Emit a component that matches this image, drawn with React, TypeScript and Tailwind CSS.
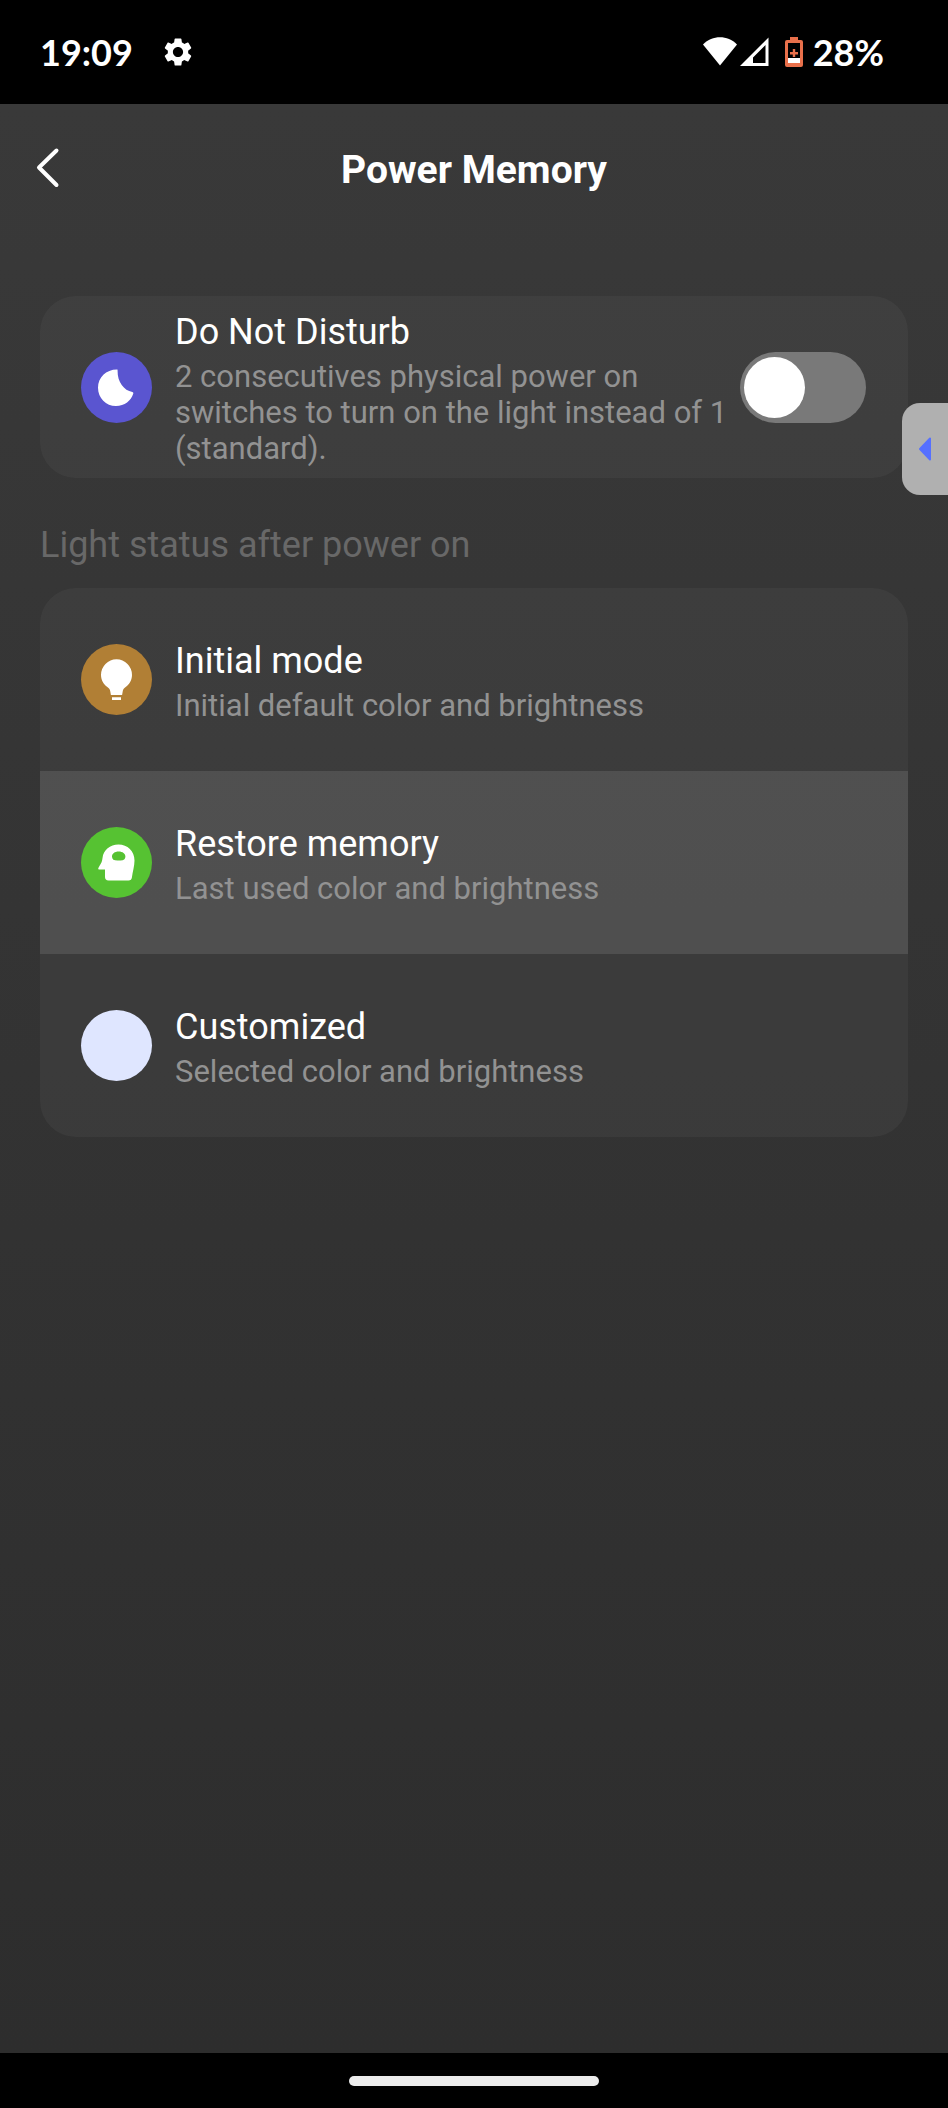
import { useState, type ReactNode } from "react";
import { MdSettings } from "react-icons/md";

type Mode = "initial" | "restore" | "custom";

function MoonIcon() {
  return (
    <svg viewBox="0 0 71 71" className="h-full w-full fill-white" aria-hidden="true">
      <path d="M36 17.6C25 17.6 17 25.6 17 35.7C17 46 25 54 35 54C43.5 54 50.3 48.6 52.3 41.5C52.5 40.6 52 40.2 51.3 40C43 38.5 36.4 30 36.6 19C36.6 18 36.6 17.6 36 17.6Z" />
    </svg>
  );
}

function BulbIcon() {
  return (
    <svg viewBox="0 0 71 71" className="h-full w-full fill-white" aria-hidden="true">
      <path d="M35.5 15.3A15.6 15.6 0 0 0 20 31C20 36 22.5 40 26 42.7C28.5 44.6 29 45.5 29.3 47.5L29.9 51H41.1L41.7 47.5C42 45.5 42.5 44.6 45 42.7C48.5 40 51 36 51 31A15.6 15.6 0 0 0 35.5 15.3Z" />
      <path d="M31 53.3H40V56H31Z" />
    </svg>
  );
}

function HeadIcon() {
  return (
    <svg viewBox="0 0 71 71" className="h-full w-full fill-white" aria-hidden="true">
      <path
        fillRule="evenodd"
        d="M37.5 17.5C46.5 17.5 53.5 24 53.5 33.5C53.5 39 51.6 45 50.9 50.5C50.6 52.6 49.6 53.5 47.5 53.5H27.5C25.2 53.5 24 52.3 24 50V42.6H18.5C17.3 42.6 16.9 41.7 17.5 40.7C19.5 37.2 21 35.6 21.5 31C22.4 23 29 17.5 37.5 17.5ZM37.6 24.4C33.7 24.4 31 26.6 31 29.4C31 32.3 32.8 33.5 36.5 33.5H39.5C42.8 33.5 44.4 32 44.4 29.4C44.4 26.6 41.7 24.4 37.6 24.4Z"
      />
    </svg>
  );
}

const MODES: { id: Mode; title: string; text: string; color: string; icon: ReactNode }[] = [
  {
    id: "initial",
    title: "Initial mode",
    text: "Initial default color and brightness",
    color: "bg-[#b17f35]",
    icon: <BulbIcon />,
  },
  {
    id: "restore",
    title: "Restore memory",
    text: "Last used color and brightness",
    color: "bg-[#56c232]",
    icon: <HeadIcon />,
  },
  {
    id: "custom",
    title: "Customized",
    text: "Selected color and brightness",
    color: "bg-[#dfe6ff]",
    icon: null,
  },
];

function RoundIcon({ color, children }: { color: string; children?: ReactNode }) {
  return <span className={`h-[71px] w-[71px] shrink-0 overflow-hidden rounded-full ${color}`}>{children}</span>;
}

function RowText({ title, text }: { title: string; text: string }) {
  return (
    <span className="flex min-w-0 flex-1 flex-col gap-1.5 pt-1">
      <span className="text-[36px] leading-[42px] text-white">{title}</span>
      <span className="text-[31px] leading-[36px] text-[#929292]">{text}</span>
    </span>
  );
}

function StatusBar() {
  return (
    <div className="flex h-[104px] items-center justify-between bg-black pr-16 pl-10 font-['Lato',sans-serif] text-[36px] leading-none font-bold text-white">
      <div className="flex items-center gap-7">
        <span>19:09</span>
        <MdSettings className="h-[34px] w-[34px]" aria-hidden="true" />
      </div>
      <div className="flex items-center">
        <svg viewBox="0 0 66 30" className="h-[30px] w-[66px]" aria-hidden="true">
          <path d="M0 7.5C9.5-2.2 24.5-2.2 34 7.5L17 28.5Z" fill="#fff" />
          <path d="M65.5 .5V29H37ZM62.5 8L50 20.5V26H62.5Z" fill="#fff" fillRule="evenodd" />
        </svg>
        <svg viewBox="0 0 18 30" className="mr-2.5 ml-4 h-[30px] w-[18px]" aria-hidden="true">
          <path d="M5 0H13V3H16Q18 3 18 5V28Q18 30 16 30H2Q0 30 0 28V5Q0 3 2 3H5Z" fill="#e9704b" />
          <path d="M3 6H15V21H3Z" fill="#000" />
          <path d="M3 21H15V26H3Z" fill="#fff" />
          <path d="M7.8 12H10.2V15H13V17.4H10.2V20H7.8V17.4H5V15H7.8Z" fill="#e9704b" />
        </svg>
        <span>28%</span>
      </div>
    </div>
  );
}

export default function App() {
  const [dnd, setDnd] = useState(false);
  const [mode, setMode] = useState<Mode>("restore");

  return (
    <div className="relative flex min-h-screen flex-col bg-black font-['Roboto',sans-serif]">
      <StatusBar />

      <main className="flex-1 bg-linear-to-b from-[#393939] to-[#2d2d2d] px-10">
        <header className="grid h-32 grid-cols-[1fr_auto_1fr] items-center">
          <button type="button" aria-label="Back" className="-ml-1 h-12 w-6 cursor-pointer">
            <svg viewBox="0 0 24 48" className="h-12 w-6" fill="none" aria-hidden="true">
              <path d="M20.5 6.5L3 23.5L20.5 41" stroke="#fff" strokeWidth="4" strokeLinecap="round" strokeLinejoin="round" />
            </svg>
          </button>
          <h1 className="pt-1 text-[39px] leading-[46px] font-bold text-white">Power Memory</h1>
        </header>

        <label className="mt-16 flex min-h-[182px] cursor-pointer items-center rounded-[36px] bg-white/4 pr-[42px] pl-[41px]">
          <RoundIcon color="bg-[#5a55d0]">
            <MoonIcon />
          </RoundIcon>
          <span className="ml-[23px] flex min-w-0 flex-1">
            <RowText
              title="Do Not Disturb"
              text="2 consecutives physical power on switches to turn on the light instead of 1 (standard)."
            />
          </span>
          <input
            type="checkbox"
            role="switch"
            checked={dnd}
            onChange={(e) => setDnd(e.target.checked)}
            className="ml-2.5 flex h-[71px] w-[126px] shrink-0 cursor-pointer appearance-none items-center rounded-full bg-[#797979] px-1 before:h-[61px] before:w-[61px] before:rounded-full before:bg-white before:content-[''] checked:justify-end checked:bg-[#5a55d0]"
          />
        </label>

        <fieldset>
          <legend className="pt-[46px] pb-[22px] text-[36px] leading-[42px] text-[#686868]">
            Light status after power on
          </legend>
          <div className="overflow-hidden rounded-[36px] bg-white/4">
            {MODES.map((m) => (
              <label
                key={m.id}
                className="relative flex min-h-[183px] cursor-pointer items-center px-[41px] has-checked:bg-white/10"
              >
                <input
                  type="radio"
                  name="mode"
                  checked={mode === m.id}
                  onChange={() => setMode(m.id)}
                  className="sr-only"
                />
                <RoundIcon color={m.color}>{m.icon}</RoundIcon>
                <span className="ml-[23px] flex min-w-0 flex-1">
                  <RowText title={m.title} text={m.text} />
                </span>
              </label>
            ))}
          </div>
        </fieldset>
      </main>

      <footer className="flex h-[55px] items-center justify-center bg-black">
        <span className="h-2.5 w-[250px] rounded-full bg-[#ececec]" />
      </footer>

      {/* edge panel handle, floats over the page */}
      <button
        type="button"
        aria-label="Open side panel"
        className="absolute top-[403px] right-0 flex h-[92px] w-[46px] cursor-pointer items-center rounded-l-[18px] bg-[#b0b0b0] pl-4"
      >
        <svg viewBox="0 0 14 24" className="h-6 w-3.5" aria-hidden="true">
          <path d="M12 1.5V22.5L2 12Z" fill="#5670ff" stroke="#5670ff" strokeWidth="2" strokeLinejoin="round" />
        </svg>
      </button>
    </div>
  );
}
